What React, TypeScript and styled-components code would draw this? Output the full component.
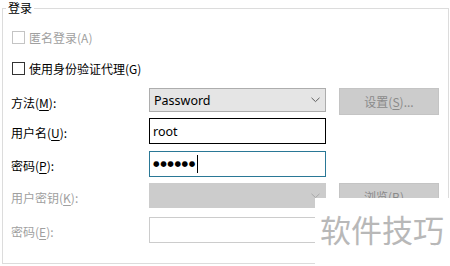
import React from 'react';
import styled, { createGlobalStyle } from 'styled-components';

const GlobalStyle = createGlobalStyle`
  html, body {
    margin: 0;
    padding: 0;
    background: #ffffff;
  }
  body {
    font-family: "Noto Sans CJK SC", "Noto Sans", sans-serif;
    font-size: 12px;
    color: #000000;
  }
`;

const Chevron: React.FC<{ color: string }> = ({ color }) => (
  <svg width="9" height="6" viewBox="0 0 9 6">
    <path d="M0.5 0.8 L4.5 4.6 L8.5 0.8" fill="none" stroke={color} strokeWidth="1" />
  </svg>
);

const Key: React.FC<{ k: string; u?: boolean }> = ({ k, u = true }) => (
  <>({u ? <Mn>{k}</Mn> : k})</>
);

const App: React.FC = () => {
  return (
    <Page>
      <GlobalStyle />
      <Group>
        <Legend>登录</Legend>
        <Content>
          <CheckRow $top={13} $disabled>
            <Box $disabled />
            匿名登录<Key k="A" u={false} />
          </CheckRow>
          <CheckRow $top={15}>
            <Box />
            使用身份验证代理<Key k="G" u={false} />
          </CheckRow>

          <Row $top={12}>
            <Label>方法<Key k="M" />:</Label>
            <Select>
              <SelectText>Password</SelectText>
              <Chevron color="#5f5f5f" />
            </Select>
            <Button>设置<Key k="S" />...</Button>
          </Row>

          <Row $top={3}>
            <Label>用户名<Key k="U" />:</Label>
            <Input>root</Input>
          </Row>

          <Row $top={7}>
            <Label>密码<Key k="P" />:</Label>
            <Input $focused>
              <Dots>●●●●●●</Dots>
              <Caret />
            </Input>
          </Row>

          <Row $top={6}>
            <Label $disabled>用户密钥<Key k="K" />:</Label>
            <Select $disabled>
              <SelectText />
              <Chevron color="#a8a8a8" />
            </Select>
            <Button>浏览<Key k="B" />...</Button>
          </Row>

          <Row $top={7}>
            <Label $disabled>密码<Key k="E" />:</Label>
            <Input $disabled />
          </Row>
        </Content>
      </Group>
      <Watermark>软件技巧</Watermark>
    </Page>
  );
};

const Page = styled.div`
  position: relative;
  width: 450px;
  height: 266px;
  overflow: hidden;
`;

const Group = styled.fieldset`
  margin: 0 1px 0 2px;
  padding: 0;
  height: 264px;
  box-sizing: border-box;
  border: 1px solid #dcdcdc;
  min-width: 0;
`;

const Legend = styled.legend`
  margin-left: 3px;
  padding: 0 2px;
  line-height: 16px;
  font-size: 12px;
  color: #000;
`;

const Content = styled.div`
  padding-left: 8px;
  display: flex;
  flex-direction: column;
`;

const CheckRow = styled.div<{ $top: number; $disabled?: boolean }>`
  display: flex;
  align-items: center;
  height: 16px;
  margin-top: ${p => p.$top}px;
  color: ${p => (p.$disabled ? '#a0a0a0' : '#000')};
  white-space: nowrap;
`;

const Box = styled.span<{ $disabled?: boolean }>`
  width: 13px;
  height: 13px;
  box-sizing: border-box;
  margin: 0 4px 0 1px;
  border: 1px solid ${p => (p.$disabled ? '#c4c4c4' : '#333333')};
  background: #fff;
`;

const Mn = styled.span`
  text-decoration: underline;
  text-underline-offset: 2px;
`;

const Row = styled.div<{ $top: number }>`
  display: flex;
  align-items: flex-start;
  margin-top: ${p => p.$top}px;
`;

const Label = styled.div<{ $disabled?: boolean }>`
  width: 138px;
  height: 26px;
  display: flex;
  align-items: center;
  padding-top: 2px;
  box-sizing: border-box;
  color: ${p => (p.$disabled ? '#a0a0a0' : '#000')};
  white-space: nowrap;
`;

const Select = styled.div<{ $disabled?: boolean }>`
  width: 177px;
  height: ${p => (p.$disabled ? 25 : 24)}px;
  box-sizing: border-box;
  display: flex;
  align-items: center;
  justify-content: space-between;
  padding: 0 5px 0 4px;
  background: ${p => (p.$disabled ? '#cccccc' : '#e5e5e5')};
  border: 1px solid ${p => (p.$disabled ? '#cccccc' : '#adadad')};
`;

const SelectText = styled.span`
  font-family: "Segoe UI", "Noto Sans", sans-serif;
  font-size: 12.5px;
  color: #000;
`;

const Button = styled.div`
  width: 100px;
  height: 27px;
  margin-left: 13px;
  box-sizing: border-box;
  display: flex;
  align-items: center;
  justify-content: center;
  background: #cccccc;
  border: 1px solid #c4c4c4;
  color: #8a8a8a;
  white-space: nowrap;
`;

const Input = styled.div<{ $focused?: boolean; $disabled?: boolean }>`
  width: 177px;
  height: 26px;
  box-sizing: border-box;
  display: flex;
  align-items: center;
  padding: 0 3px;
  background: #fff;
  border: 1px solid
    ${p => (p.$focused ? '#2a7896' : p.$disabled ? '#cccccc' : '#000000')};
  font-family: "Segoe UI", "Noto Sans", sans-serif;
  font-size: 12.5px;
`;

const Dots = styled.span`
  font-family: "DejaVu Sans", sans-serif;
  font-size: 7.5px;
  letter-spacing: 0.6px;
  line-height: 1;
`;

const Caret = styled.span`
  width: 1px;
  height: 18px;
  margin-left: 1px;
  background: #000;
`;

const Watermark = styled.div`
  position: absolute;
  left: 315px;
  top: 198px;
  right: 0;
  bottom: 0;
  background: #fff;
  padding: 15px 0 0 5px;
  font-family: "Noto Sans CJK SC", sans-serif;
  font-size: 31px;
  line-height: 1;
  color: #b8b8b8;
  white-space: nowrap;
`;

export default App;
